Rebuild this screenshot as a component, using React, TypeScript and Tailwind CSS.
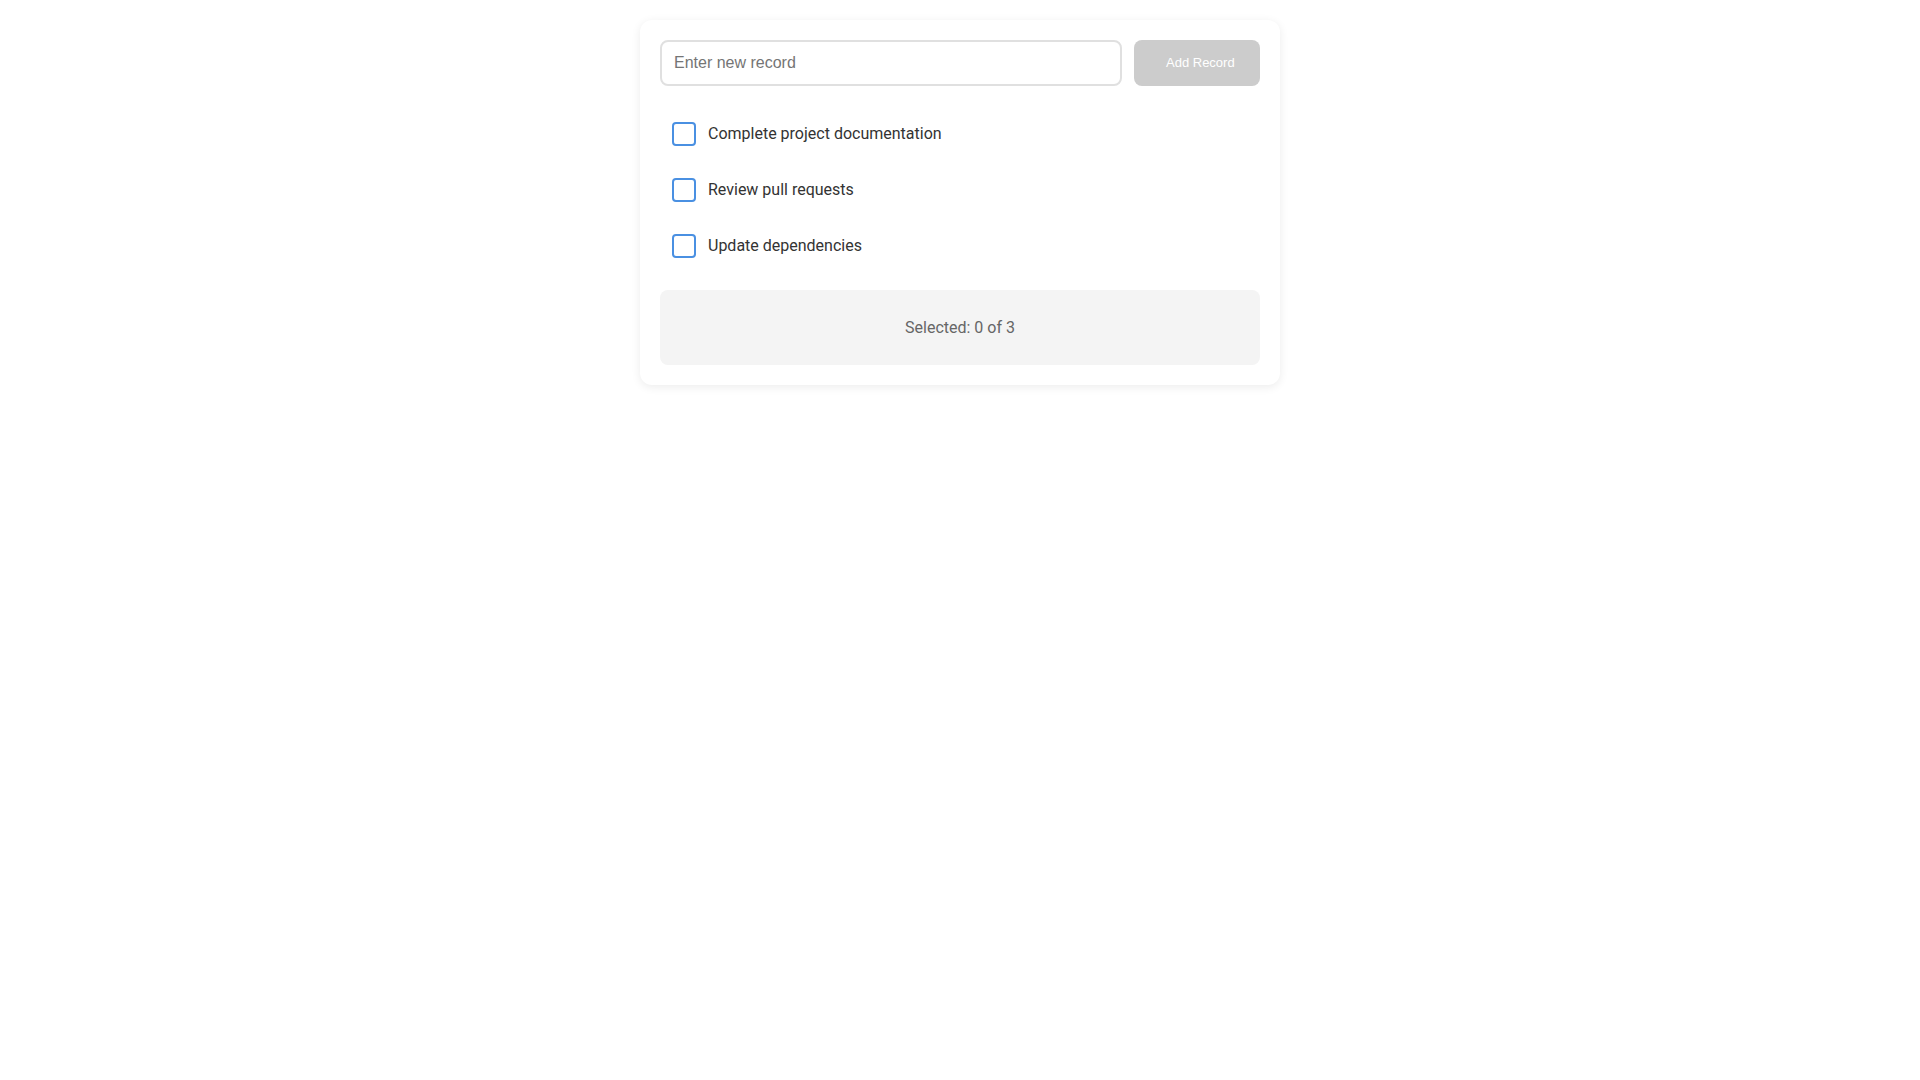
import React, { useState } from "react";

const initialRecords = [
  { id: 1, label: "Complete project documentation" },
  { id: 2, label: "Review pull requests" },
  { id: 3, label: "Update dependencies" },
];

export default function App() {
  const [records] = useState(initialRecords);
  const [selected, setSelected] = useState<number[]>([]);
  const [value, setValue] = useState("");

  const toggle = (id: number) =>
    setSelected((s) => (s.includes(id) ? s.filter((x) => x !== id) : [...s, id]));

  return (
    <div className="min-h-screen bg-white pt-5 font-['Roboto',sans-serif]">
      <div className="mx-auto w-[640px] rounded-xl bg-white p-5 shadow-[0_2px_10px_rgba(0,0,0,0.08)]">
        <div className="flex gap-3">
          <input
            value={value}
            onChange={(e) => setValue(e.target.value)}
            placeholder="Enter new record"
            className="h-[46px] flex-1 rounded-lg border-2 border-[#e0e0e0] px-3 font-['Liberation_Sans',Arial,sans-serif] text-base text-[#333] placeholder:text-[#757575] outline-none"
          />
          <button
            disabled={!value}
            className="h-[46px] w-[126px] rounded-lg bg-[#cccccc] pl-8 pr-6 text-left font-['Liberation_Sans',Arial,sans-serif] text-[13px] text-white"
          >
            Add Record
          </button>
        </div>

        <ul className="mt-6 flex flex-col gap-2">
          {records.map((r) => (
            <li
              key={r.id}
              onClick={() => toggle(r.id)}
              className="flex cursor-pointer items-center gap-3 p-3"
            >
              <span
                className={
                  selected.includes(r.id)
                    ? "h-6 w-6 rounded border-2 border-[#4a90e2] bg-[#4a90e2]"
                    : "h-6 w-6 rounded border-2 border-[#4a90e2] bg-white"
                }
              />
              <span className="text-base text-[#333]">{r.label}</span>
            </li>
          ))}
        </ul>

        <div className="mt-5 flex h-[75px] items-center justify-center rounded-lg bg-[#f4f4f4] text-base text-[#666]">
          Selected: {selected.length} of {records.length}
        </div>
      </div>
    </div>
  );
}
